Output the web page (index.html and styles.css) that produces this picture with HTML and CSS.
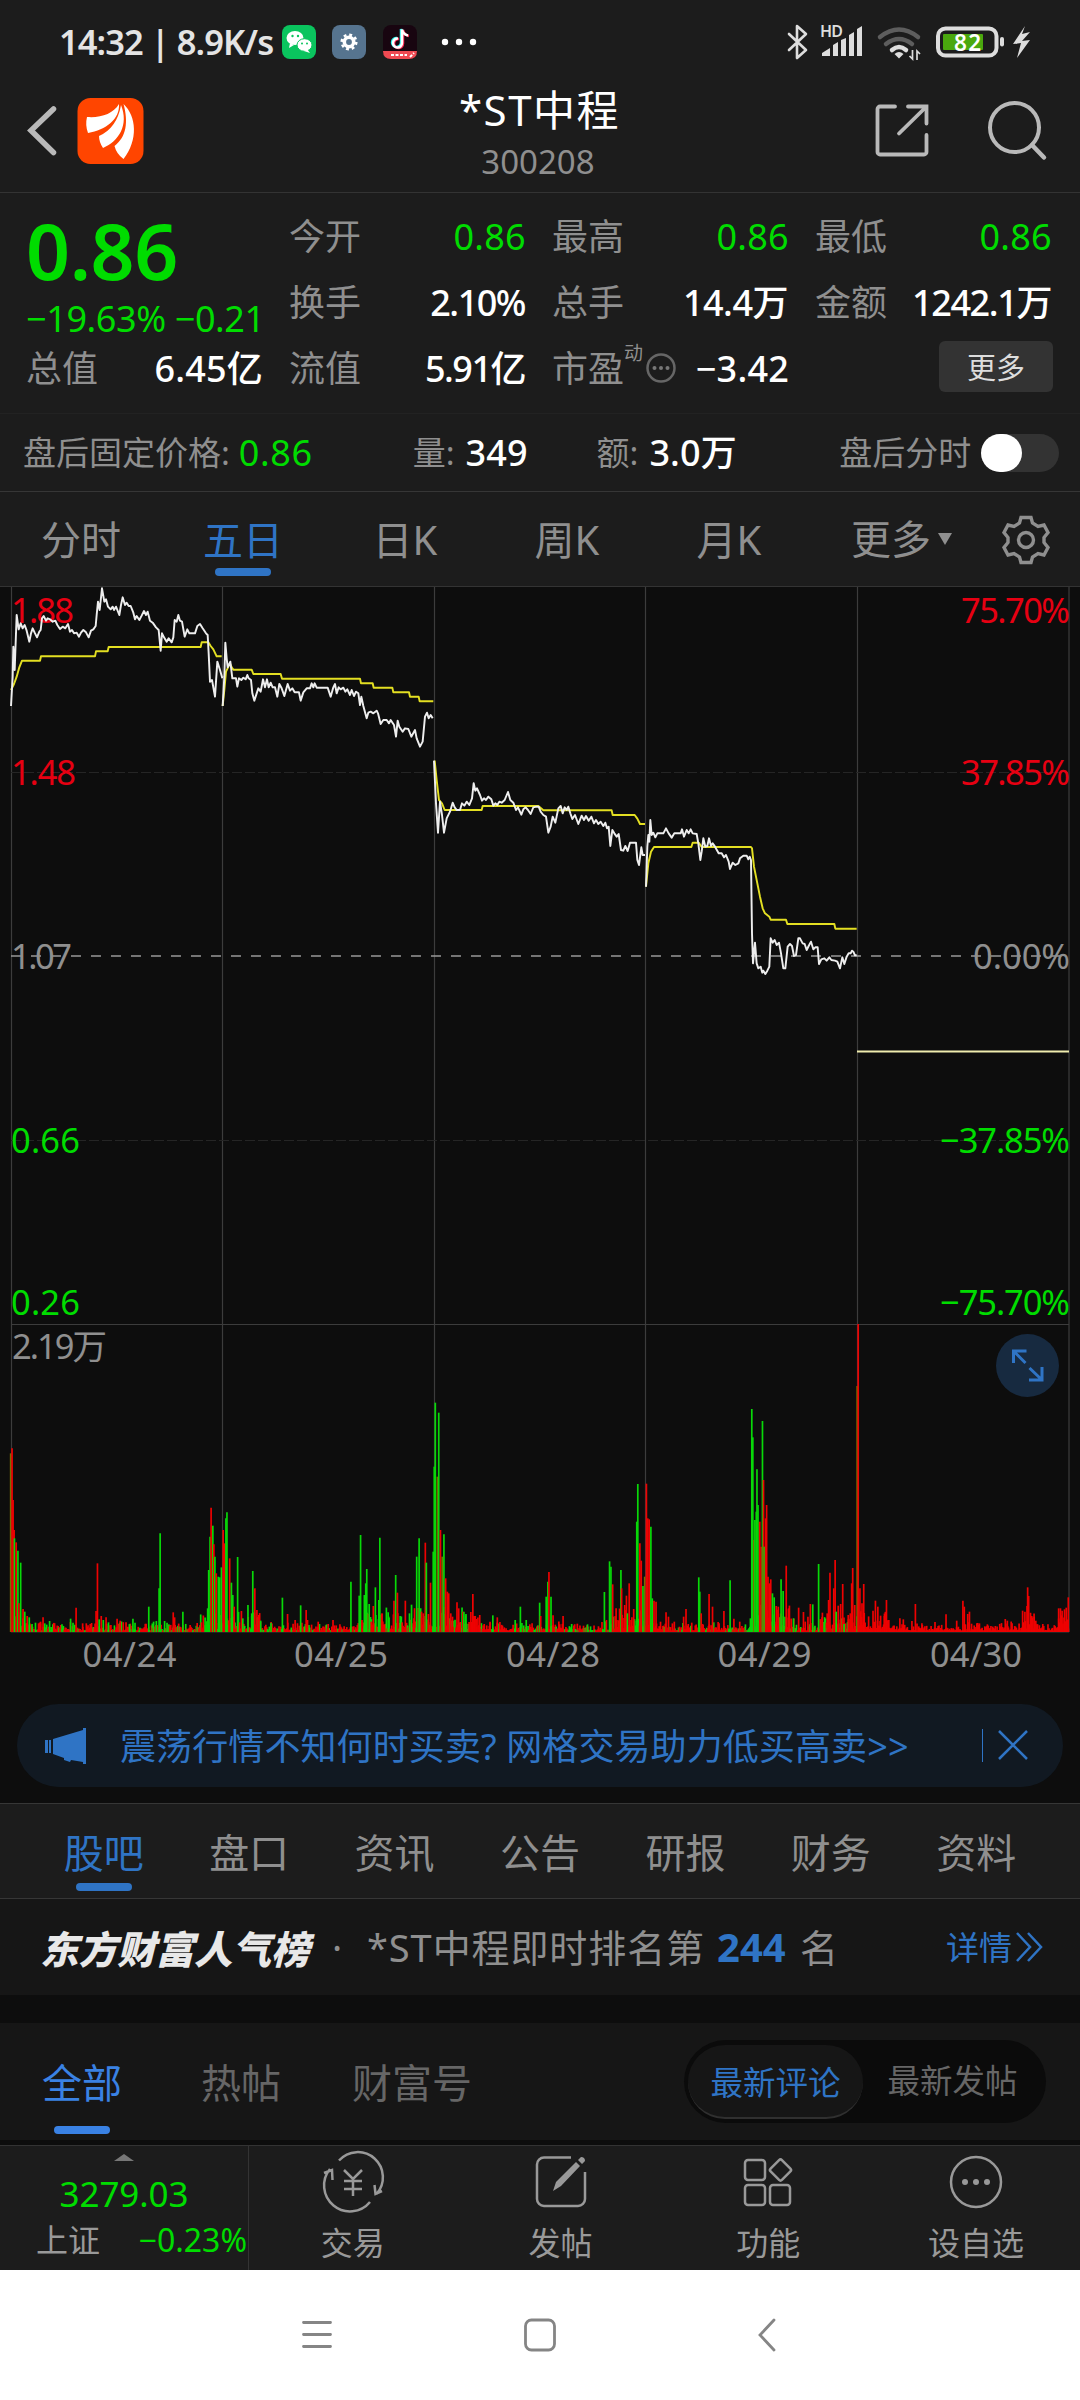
FILE: index.html
```html
<!DOCTYPE html>
<html lang="zh-CN">
<head>
<meta charset="utf-8">
<title>*ST中程 300208</title>
<link rel="stylesheet" href="styles.css">
</head>
<body>
<header class="top">
  <div class="status">
    <span class="clock">14:32 | 8.9K/s</span>
    <svg class="apps" width="200" height="40" viewBox="280 22 200 40">
      <rect x="282" y="25" width="34" height="34" rx="8" fill="#0ac45e"/>
      <ellipse cx="295" cy="38" rx="8.5" ry="7" fill="#fff"/><path d="M290 43l-1 5 5-3z" fill="#fff"/>
      <ellipse cx="304.500" cy="45" rx="7.500" ry="6.300" fill="#fff" stroke="#0ac45e" stroke-width="1"/><path d="M307 49l3 4-6-2z" fill="#fff"/>
      <g fill="#0ac45e"><circle cx="292.500" cy="36" r="1.200"/><circle cx="298" cy="36" r="1.200"/><circle cx="302" cy="43.500" r="1"/><circle cx="307" cy="43.500" r="1"/></g>
      <rect x="332" y="25" width="34" height="34" rx="8" fill="#56748f"/>
      <circle cx="349" cy="42" r="4.700" fill="none" stroke="#fff" stroke-width="3.600"/>
      <circle cx="349" cy="42" r="7.300" fill="none" stroke="#fff" stroke-width="2.500" stroke-dasharray="2.900 2.833"/>
      <rect x="383" y="25" width="34" height="34" rx="8" fill="#180510"/>
      <path d="M383 51h34q0 8-8 8h-18q-8 0-8-8z" fill="#ef4a52"/>
      <path d="M391 55h16M410 57l4-4" stroke="#fff" stroke-width="2" stroke-dasharray="3 1.500"/>
      <g fill="none" stroke-width="2.500"><path d="M397 38a4.500 4.500 0 1 0 4 4.500V29q1 5 6 6" stroke="#25f4ee"/><path d="M399 39a4.500 4.500 0 1 0 4 4.500V30q1 5 6 6" stroke="#fe2c55"/><path d="M398 38.500a4.500 4.500 0 1 0 4 4.500V29.500q1 5 6 6" stroke="#fff"/></g>
      <g fill="#fff"><circle cx="445" cy="42" r="3.200"/><circle cx="459" cy="42" r="3.200"/><circle cx="473" cy="42" r="3.200"/></g>
    </svg>
    <svg class="signals" width="250" height="40" viewBox="784 22 250 40">
      <path d="M789 34l17 16-9 8V26l9 8-17 16" fill="none" stroke="#ddd" stroke-width="2.600" stroke-linejoin="round" stroke-linecap="round"/>
      <text x="820" y="37" class="hd" textLength="23">HD</text>
      <path d="M822 56v-3l8-5v8zM833 56V45l5-3v14zM841 56V40l5-2v18zM849 56V35l5-3v24zM857 56V29l5-3v30z" fill="#ddd"/>
      <g fill="none" stroke-linecap="round" stroke-width="4.500"><path d="M880 37q19-15 38 0" stroke="#5d5d5d"/><path d="M886 44q13-10 26 0" stroke="#5d5d5d"/><path d="M892 50q7-6 14 0" stroke="#ddd"/></g>
      <path d="M894.500 54q4.500-4 9 0l-4.500 4.500z" fill="#ddd"/>
      <path d="M912.500 50v9l-3-3M917 60v-9l3 3" fill="none" stroke="#ddd" stroke-width="1.700"/>
      <rect x="938" y="28.500" width="58.500" height="27" rx="7.500" fill="none" stroke="#ddd" stroke-width="4"/>
      <rect x="943" y="34" width="40" height="16" rx="1" fill="#4aa80e"/>
      <rect x="1000" y="37" width="4" height="9.500" rx="2" fill="#ddd"/>
      <text x="954" y="51" class="battery" textLength="27">82</text>
      <path d="M1025 26l-12 18 8-1-4 15 13-18-8 1 8-9-8 2z" fill="#ddd"/>
    </svg>
  </div>
  <div class="titlebar">
    <svg width="130" height="72" viewBox="20 95 130 72">
      <path d="M53.500 109L31 130.500 53.500 152.500" fill="none" stroke="#b9b9b9" stroke-width="5.500" stroke-linecap="round"/>
      <rect x="77.500" y="98" width="66" height="66" rx="13" fill="#ff4500"/>
      <path d="M87 117C101 118 113 114 119 104c1 15-13 26-31 29q-3-8-1-16z" fill="#fff"/>
      <path d="M99 136q18-8 22-31c8 20-2 36-18 43q-4-6-4-12z" fill="#fff"/>
      <path d="M123.500 104c13 12 15 36 0 55q-7-5-9-13c12-9 14-24 9-42z" fill="#fff"/>
    </svg>
    <div class="name"><h1>*ST中程</h1><p>300208</p></div>
    <svg width="180" height="64" viewBox="872 98 180 64" fill="none" stroke="#b9b9b9">
      <path d="M895 106.500h-15a2.500 2.500 0 0 0-2.500 2.500v43a2.500 2.500 0 0 0 2.500 2.500h44a2.500 2.500 0 0 0 2.500-2.500v-17M908 106.500h18.500v17M926 107L899 133.500" stroke-width="3.800" stroke-linecap="round"/>
      <circle cx="1014.500" cy="127.500" r="24.500" stroke-width="4"/><path d="M1032 145l12 12.500" stroke-width="4.500" stroke-linecap="round"/>
    </svg>
  </div>
</header>

<section class="quote">
  <div class="col">
    <div class="price">0.86</div>
    <div class="change">−19.63% −0.21</div>
    <div class="cell"><span>总值</span><b class="wide">6.45亿</b></div>
  </div>
  <div class="col">
    <div class="cell"><span>今开</span><b class="down">0.86</b></div>
    <div class="cell"><span>换手</span><b class="pct">2.10%</b></div>
    <div class="cell"><span>流值</span><b class="pct">5.91亿</b></div>
  </div>
  <div class="col">
    <div class="cell"><span>最高</span><b class="down">0.86</b></div>
    <div class="cell"><span>总手</span><b>14.4万</b></div>
    <div class="cell"><span>市盈<sup>动</sup></span>
      <svg class="info" width="32" height="32" viewBox="0 0 32 32"><circle cx="16" cy="16" r="13.500" fill="none" stroke="#666" stroke-width="2.500"/><g fill="#777"><circle cx="9.500" cy="16" r="2"/><circle cx="16" cy="16" r="2"/><circle cx="22.500" cy="16" r="2"/></g></svg>
      <b class="wide">−3.42</b></div>
  </div>
  <div class="col">
    <div class="cell"><span>最低</span><b class="down">0.86</b></div>
    <div class="cell"><span>金额</span><b class="amount">1242.1万</b></div>
    <div class="cell end"><button class="more">更多</button></div>
  </div>
</section>
<section class="after">
  <span class="a1">盘后固定价格:</span><b class="down">0.86</b>
  <span class="a2">量:</span><b>349</b>
  <span class="a3">额:</span><b>3.0万</b>
  <span class="a4">盘后分时</span><i class="toggle"></i>
</section>

<nav class="periods">
  <a>分时</a><a class="on">五日</a><a>日K</a><a>周K</a><a>月K</a>
  <a class="drop">更多<svg width="14" height="12" viewBox="0 0 14 12"><path d="M0 0h14L7 12z" fill="#8f8f8f"/></svg></a>
  <svg class="gear" width="50" height="50" viewBox="-25 -25 50 50" fill="none" stroke="#8f8f8f" stroke-width="3.400">
    <path d="M-5-22.500H5L6.500-17 12-13.500 18-15 22-7.500 18-2.500V2.500L22 7.500 18 15 12 13.500 6.500 17 5 22.500H-5L-6.500 17-12 13.500-18 15-22 7.500-18 2.500V-2.500L-22-7.500-18-15-12-13.500-6.500-17z"/><circle r="7.500"/>
  </svg>
</nav>

<section class="chart">
  <svg width="1080" height="1104" viewBox="0 587 1080 1104">
    <g stroke="#3c3c3c" stroke-width="1.200" fill="none">
      <path d="M11.500 587V1632M222.500 587V1632M434.500 587V1632M645.500 587V1632M857.500 587V1632M1069 587V1632M11 1324.500H1069M11 1632H1069"/>
      <path d="M11 772.500H1069M11 1140.500H1069" stroke="#252525" stroke-dasharray="10 3"/>
    </g>
    <path d="M11 956H1069" stroke="#989898" stroke-width="1.500" stroke-dasharray="10 10"/>
    <g class="labels">
      <text class="up" x="11" y="623" textLength="63">1.88</text><text class="up" x="11" y="785" textLength="65">1.48</text>
      <text x="11" y="969" textLength="61">1.07</text>
      <text class="dn" x="11" y="1153" textLength="69">0.66</text><text class="dn" x="11" y="1315" textLength="69">0.26</text>
      <g text-anchor="end"><text class="up" x="1070" y="623" textLength="109">75.70%</text><text class="up" x="1070" y="785" textLength="109">37.85%</text><text x="1070" y="969" textLength="97">0.00%</text><text class="dn" x="1070" y="1153" textLength="130">−37.85%</text><text class="dn" x="1070" y="1315" textLength="130">−75.70%</text></g>
      <text x="12" y="1359" textLength="95">2.19万</text>
      <g text-anchor="middle"><text x="129.500" y="1667" textLength="94">04/24</text><text x="341" y="1667" textLength="94">04/25</text><text x="553" y="1667" textLength="94">04/28</text><text x="764.500" y="1667" textLength="94">04/29</text><text x="976" y="1667" textLength="92">04/30</text></g>
    </g>
    <g class="avg" transform="translate(0 580) scale(.33333)">
      <polyline points="33,330 42,312 50,290 58,262 66,242 120,242 123,229 285,229 288,214 323,214 326,201 602,201 605,187 625,187 632,198 640,208 650,229 665,229"/>
      <polyline points="668,378 673,330 678,275 690,250 695,262 700,269 755,269 760,282 842,282 846,296 1080,296 1083,310 1118,310 1121,323 1177,323 1180,337 1227,337 1230,350 1256,350 1259,364 1300,364"/>
    </g>
    <g class="avg" transform="translate(430 720) scale(.33333)">
      <polyline points="14,122 20,180 27,240 36,250 44,270 155,270 158,258 325,258 340,271 545,271 548,285 614,285 622,296 630,312 645,312"/>
      <polyline points="648,500 655,430 663,395 672,381 784,381 788,368 806,368 815,381 963,381 966,385 972,440 982,490 990,530 998,565 1005,580 1018,590 1022,599 1068,599 1072,612 1213,612 1216,626 1280,626"/>
    </g>
    <g class="line" transform="translate(0 580) scale(.33333)">
      <polyline points="33,378 38,290 40,200 44,270 50,105 56,148 62,130 68,145 74,135 80,152 88,185 93,160 98,145 104,158 111,172 118,155 122,150 126,115 131,108 138,122 143,115 150,118 158,125 166,122 172,135 180,147 188,140 196,145 204,132 210,155 216,150 222,160 230,158 237,170 243,158 250,150 258,157 266,172 273,152 280,148 287,138 290,105 294,65 299,90 306,25 313,65 318,58 324,80 332,88 338,80 342,90 348,80 358,105 363,75 368,52 375,75 380,68 386,78 392,78 400,98 405,118 410,108 418,120 425,107 432,93 438,105 443,95 450,122 458,128 468,142 476,150 482,212 486,160 492,172 500,185 506,175 515,187 520,172 524,120 530,125 535,105 540,122 546,125 554,170 562,148 568,160 585,160 592,138 600,132 608,145 618,160 623,165 626,220 630,305 636,300 645,350 652,245 660,270 667,295"/>
      <polyline points="668,378 673,290 676,188 680,235 683,262 691,245 697,295 708,295 712,320 717,295 724,300 730,293 737,298 742,285 746,295 753,300 757,340 763,362 770,340 775,325 782,335 789,298 795,322 801,298 806,322 812,308 818,322 825,322 832,350 838,312 845,325 853,348 863,312 870,332 877,325 884,337 897,337 902,362 910,337 920,325 930,325 935,310 940,322 944,310 950,323 983,323 992,350 1000,322 1005,312 1010,340 1016,322 1022,328 1030,323 1036,335 1042,328 1050,345 1055,330 1062,348 1068,335 1075,340 1080,375 1084,350 1090,378 1100,415 1105,398 1112,395 1120,400 1130,392 1134,400 1142,432 1150,420 1160,420 1167,430 1172,420 1182,435 1188,470 1193,422 1198,440 1208,455 1215,445 1225,447 1234,470 1245,450 1250,475 1260,500 1268,485 1275,410 1281,398 1286,415 1292,405 1298,415"/>
    </g>
    <g class="line" transform="translate(430 720) scale(.33333)">
      <polyline points="12,122 18,250 24,338 30,245 36,285 42,338 50,295 60,275 68,248 74,262 80,270 90,270 96,250 103,257 110,245 118,255 126,235 131,190 136,212 141,205 150,225 156,242 162,235 168,240 175,230 184,238 190,257 196,250 202,255 208,245 215,248 224,240 234,216 241,240 250,248 258,270 264,262 274,284 280,268 287,262 294,270 302,282 310,262 320,260 326,260 332,275 340,285 348,290 355,338 362,320 368,290 376,308 385,265 392,258 398,280 404,262 410,270 415,260 421,280 427,297 435,285 445,312 455,287 462,300 468,288 476,302 484,290 492,310 498,300 505,312 512,305 520,318 526,308 531,325 536,320 541,378 547,330 553,340 560,350 566,342 573,390 580,392 586,378 593,393 600,368 618,368 622,420 627,435 634,382 638,405 645,405"/>
      <polyline points="648,500 652,380 655,345 658,365 661,300 665,345 670,338 676,352 682,340 700,340 708,325 716,340 725,353 733,340 752,340 756,328 762,350 770,330 776,340 782,328 788,340 800,342 805,370 811,420 815,395 820,355 826,380 832,378 837,355 843,378 848,370 855,380 866,400 875,400 882,412 888,405 896,425 900,447 908,428 916,435 925,430 930,415 940,407 950,407 955,418 959,410 963,420 966,640 969,730 975,668 980,730 985,745 992,740 997,758 1000,752 1006,762 1012,752 1018,740 1022,655 1028,668 1034,660 1040,675 1047,668 1053,700 1060,745 1066,745 1073,680 1080,672 1086,678 1092,708 1098,705 1105,655 1110,655 1118,670 1124,672 1130,690 1136,678 1143,665 1150,688 1156,682 1163,682 1167,732 1174,718 1183,715 1190,722 1198,712 1204,720 1215,722 1222,725 1230,745 1237,712 1243,732 1250,710 1256,700 1262,700 1266,692 1270,695 1275,706 1280,706"/>
    </g>
    <path d="M857 1051.500H1069" stroke="#efecae" stroke-width="2"/>
    <g id="volume" stroke-width="1.700"></g>
    <circle cx="1027.500" cy="1365.500" r="31.500" fill="#172a40"/>
    <path d="M1013.500 1363v-12h13M1014 1351.500l11.500 11.500M1042 1367v13h-13M1041.500 1379.500l-12-11.500" fill="none" stroke="#2f74c5" stroke-width="3"/>
  </svg>
</section>

<div class="promo-wrap"><div class="promo">
  <svg width="44" height="40" viewBox="43 1725 44 40" fill="#2f74c5"><path d="M45 1739h3v13h-3zM49 1739h2v13h-2zM53 1738l30-9v-2h3v36h-3v-2l-12-2-1 2-6-2v-2l-11-4z"/></svg>
  <span>震荡行情不知何时买卖? 网格交易助力低买高卖&gt;&gt;</span>
  <svg width="50" height="38" viewBox="980 1727 50 38" fill="none" stroke="#2f74c5"><path d="M982.500 1729v33" stroke-width="1"/><path d="M999 1731l28 28M1027 1731l-28 28" stroke-width="2.500"/></svg>
</div></div>

<nav class="sections"><a class="on">股吧</a><a>盘口</a><a>资讯</a><a>公告</a><a>研报</a><a>财务</a><a>资料</a></nav>

<section class="rank">
  <strong>东方财富人气榜</strong><span class="dot">·</span><span class="txt">*ST中程即时排名第</span><em>244</em><span class="ming">名</span>
  <a>详情</a>
  <svg width="28" height="30" viewBox="0 0 28 30" fill="none" stroke="#2f74c5" stroke-width="2.500"><path d="M1 1l13 14L1 29M12 1l13 14-13 14"/></svg>
</section>

<section class="feed">
  <a class="on">全部</a><a>热帖</a><a>财富号</a>
  <div class="seg"><span class="sel">最新评论</span><span>最新发帖</span></div>
</section>

<footer class="bottom">
  <div class="index">
    <svg width="20" height="7" viewBox="0 0 20 7"><path d="M0 7L10 0l10 7z" fill="#777"/></svg>
    <div class="val">3279.03</div>
    <div class="sub"><span>上证</span><b>−0.23%</b></div>
  </div>
  <a><svg width="62" height="56" viewBox="-31 -28 62 56" fill="none" stroke="#999" stroke-width="2.500"><path d="M-14-21.500A25 25 0 0 1 23.500 12M17 20A25 25 0 0 1-23-13M-29-9l8-3 .5 10M29 9l-6.500 3-1-9M-9-12L0-3 9-12M0-3V14M-9-1H9M-9 7H9"/></svg>交易</a>
  <a><svg width="62" height="56" viewBox="-31 -28 62 56" fill="none" stroke="#999" stroke-width="2.500"><path d="M10-24.500H-17a7 7 0 0 0-7 7V17a7 7 0 0 0 7 7H17a7 7 0 0 0 7-7V-10"/><path d="M-8 9l3-9L15-20l4 4L0 4zM17-22l3-3q4 0 4 4l-3 3z" fill="#999" stroke="none"/></svg>发帖</a>
  <a><svg width="62" height="56" viewBox="-31 -28 62 56" fill="none" stroke="#999" stroke-width="2.500"><rect x="-23" y="-22" width="20" height="20" rx="3"/><rect x="-23" y="3" width="20" height="20" rx="3"/><rect x="2" y="3" width="20" height="20" rx="3"/><rect x="-8" y="-8" width="16" height="16" rx="2" transform="translate(12.500 -12) rotate(45)"/></svg>功能</a>
  <a><svg width="62" height="56" viewBox="-31 -28 62 56" fill="none" stroke="#999" stroke-width="2.500"><circle r="25"/><g fill="#999" stroke="none"><circle cx="-11" r="3"/><circle r="3"/><circle cx="11" r="3"/></g></svg>设自选</a>
</footer>
<div class="sysnav">
  <svg width="1080" height="50" viewBox="0 2310 1080 50" fill="none" stroke="#858585" stroke-width="2.800" stroke-linecap="round"><path d="M303.500 2322.500h27M303.500 2334.500h27M303.500 2346.500h27M774 2320l-14 15 14 15"/><rect x="525.500" y="2320" width="29" height="30" rx="6"/></svg>
</div>
<script src="volume.js"></script>
</body>
</html>
```
FILE: styles.css
```css
* { box-sizing: border-box; }
body { margin: 0; width: 1080px; background: #0d0d0d; color: #8f8f8f; font-family: "Noto Sans", "Noto Sans CJK SC", sans-serif; font-size: 36px; line-height: 1; }
svg { display: block; flex: none; overflow: visible; }
b { font-weight: 500; color: #fff; }
b.down { color: #00dc00; font-weight: 400; letter-spacing: .4px; }

.top { height: 193px; background: #1c1c1c; border-bottom: 1px solid #333; }
.status { height: 84px; display: flex; align-items: center; padding: 0 46px 0 59px; }
.clock { width: 221px; font-size: 34.5px; font-weight: 600; color: #e4e4e4; letter-spacing: -.95px; white-space: nowrap; }
.signals { margin-left: auto; }
.hd { font-size: 16px; font-weight: 600; fill: #ddd; }
.battery { font-size: 22.500px; font-weight: 600; fill: #fff; }
.titlebar { height: 108px; padding: 0 28px 0 20px; display: flex; justify-content: space-between; align-items: flex-start; }
.titlebar > svg:first-child { margin-top: 11px; }
.titlebar > svg:last-child { margin-top: 14px; }
.name { text-align: center; margin-left: 54px; }
.name h1 { margin: 0; font-size: 42px; font-weight: 400; line-height: 52px; color: #fff; letter-spacing: 1.5px; margin-right: -3px; white-space: nowrap; }
.name p { margin: 0; font-size: 33px; line-height: 52px; }

.quote { height: 221px; background: #1c1c1c; padding: 11px 26px 0; display: grid; grid-template-columns: repeat(4, 236px); column-gap: 27px; border-bottom: 1px solid #222; }
.cell { height: 66px; display: flex; align-items: center; justify-content: space-between; position: relative; white-space: nowrap; }
.cell b { letter-spacing: -.5px; }
.cell b.down { letter-spacing: .3px; margin-right: -1px; }
.cell b.wide { letter-spacing: .2px; margin-right: -1px; }
.cell b.pct { letter-spacing: -1.500px; }
.cell b.amount { letter-spacing: -1.400px; }
.cell.end { justify-content: flex-end; margin-right: -2px; }
.price { margin-top: 10px; height: 74px; font-size: 77px; line-height: 74px; font-weight: 600; color: #00dc00; letter-spacing: -.4px; }
.change { height: 48px; line-height: 62px; color: #00dc00; white-space: nowrap; letter-spacing: -.4px; }
.cell sup { font-size: 19px; vertical-align: 22px; line-height: 0; margin-left: 0; }
.info { position: absolute; left: 93px; top: 16px; }
.more { width: 114px; height: 51px; margin-bottom: 6px; border: 0; border-radius: 6px; background: #333; color: #ddd; font: 29px/48px "Noto Sans CJK SC", sans-serif; padding: 0; }
.after { height: 78px; background: #1c1c1c; border-bottom: 1px solid #363636; display: flex; align-items: center; padding: 0 21px 0 23px; white-space: nowrap; }
.after span { font-size: 33px; }
.after b { letter-spacing: .1px; }
.a1 { width: 216px; } .a1 + b.down { width: 174px; letter-spacing: .6px; }
.a2 { width: 53px; } .a2 + b { width: 131px; }
.a3 { width: 53px; } .a3 + b { width: 190px; }
.a4 { width: 142px; }
.toggle { width: 78px; height: 38px; border-radius: 19px; background: #333; }
.toggle::before { content: ""; display: block; width: 41px; height: 38px; border-radius: 20px; background: #fff; }

.periods, .sections { display: flex; background: #1c1c1c; font-size: 40px; }
.periods { height: 95px; border-bottom: 1px solid #333; }
.periods a { width: 162px; height: 94px; line-height: 96px; text-align: center; position: relative; white-space: nowrap; }
.on { color: #2f74c5; position: relative; }
.on::after { content: ""; position: absolute; left: 50%; margin-left: -28px; bottom: 10px; width: 56px; height: 8px; border-radius: 4px; background: currentColor; }
.periods a.drop { width: 191px; display: flex; align-items: center; gap: 7px; padding-left: 41px; }
.gear { margin-top: 23px; }

.chart { height: 1104px; }
.labels { font-size: 34.5px; fill: #8f8f8f; }
.labels .up { fill: #e60012; }
.labels .dn { fill: #00dc00; }
.avg, .line { fill: none; stroke-linejoin: round; stroke-width: 5.800px; }
.avg { stroke: #e3df22; }
.line { stroke: #eee; }

.promo-wrap { height: 112px; padding: 13px 17px 0; }
.promo { height: 83px; border-radius: 42px; background: #111922; color: #2f74c5; display: flex; align-items: center; padding: 0 33px 0 26px; }
.promo span { margin: 2px auto 0 33px; font-size: 36px; white-space: nowrap; letter-spacing: .1px; }

.sections { height: 96px; border: solid #363636; border-width: 1px 0; padding: 0 31px; }
.sections a { flex: 1; text-align: center; line-height: 97px; }
.sections .on::after { bottom: 7px; }

.rank { height: 96px; background: #161616; display: flex; align-items: center; padding: 0 36px 0 40px; white-space: nowrap; font-size: 38px; }
.rank strong { width: 292px; font: italic 900 38.5px/1 "Noto Sans CJK SC", sans-serif; color: #e8e8e8; }
.dot { width: 35px; }
.txt { width: 350px; letter-spacing: .9px; }
.rank em { width: 83px; font-style: normal; font-weight: 700; font-size: 40px; color: #2f74c5; }
.rank a { margin-left: auto; margin-right: 4px; font-size: 33px; color: #2f74c5; }

.feed { height: 117px; margin-top: 28px; background: #161616; display: flex; align-items: flex-start; font-size: 40px; color: #666; padding: 0 34px 0 42px; white-space: nowrap; }
.feed > a { height: 117px; line-height: 119px; margin-right: 79px; }
.feed > a + a { margin-right: 71px; }
.feed .on { color: #3a82e4; }
.feed .on::after { bottom: 6px; }
.seg { margin: 17px 0 0 auto; width: 362px; height: 83px; border-radius: 42px; background: #0b0b0b; padding: 4px; display: flex; align-items: center; font-size: 32.5px; }
.seg span { flex: 1; text-align: center; }
.seg .sel { flex: 0 0 175px; height: 74px; line-height: 76px; border-radius: 37px; background: #161616; border-bottom: 2px solid #303030; color: #2f74c5; }

.bottom { margin-top: 5px; height: 125px; background: #1c1c1c; border-top: 1px solid #333; display: flex; font-size: 32px; color: #999; }
.bottom > a { flex: 1; display: flex; flex-direction: column; align-items: center; padding-top: 8px; line-height: 66px; }
.index { width: 249px; border-right: 1px solid #333; padding-top: 8px; }
.index svg { margin: 0 auto; }
.val { height: 46px; line-height: 65px; text-align: center; font-size: 35px; color: #00dc00; letter-spacing: -.1px; }
.sub { display: flex; justify-content: space-between; padding: 0 1px 0 36px; line-height: 66px; }
.sub b { color: #00dc00; font-weight: 400; letter-spacing: 0; }
.sysnav { height: 130px; background: #fff; padding-top: 40px; }
```
FILE: volume.js
```js
// Per-minute volume bars: [x, bar top, colour], in chart units below the price pane.
const left = [
[31,430,'m'],[35,415,'r'],[38,570,'r'],[41,660,'r'],[42,685,'g'],[47,697,'r'],[52,722,'g'],[55,880,'r'],[60,758,'g'],[67,897,'r'],[72,905,'g'],[79,918,'r'],[85,922,'g'],[93,942,'g'],[103,938,'g'],[112,940,'r'],[118,935,'r'],[125,922,'r'],[130,940,'g'],[144,933,'g'],[180,943,'g'],[205,926,'g'],[212,938,'g'],[221,893,'r'],[240,940,'r'],[262,942,'r'],[279,903,'r'],[283,760,'r'],[288,928,'g'],[294,918,'r'],[300,930,'g'],[308,922,'r'],[315,937,'g'],[340,926,'r'],[349,932,'r'],[366,937,'r'],[376,942,'g'],[386,926,'g'],[392,938,'g'],[432,890,'g'],[446,935,'g'],[454,933,'g'],[462,835,'g'],[465,670,'g'],[478,933,'g'],[485,938,'g'],[503,907,'r'],[507,922,'r'],[531,905,'g'],[585,937,'r'],
[603,895,'g'],[606,780,'g'],[610,680,'g'],[613,593,'r'],[618,647,'g'],[621,703,'r'],[624,740,'g'],[628,790,'r'],[634,800,'g'],[638,802,'g'],[643,772,'g'],[648,660,'r'],[652,700,'r'],[656,625,'g'],[659,607,'g'],[667,745,'r'],[672,818,'g'],[676,855,'g'],[680,890,'r'],[690,741,'g'],[701,903,'r'],[705,925,'g'],[720,885,'g'],[731,910,'g'],[734,783,'g'],[740,835,'r'],[746,900,'r'],[751,915,'r'],[757,932,'g'],[787,938,'g'],[820,863,'g'],[835,912,'r'],[857,930,'r'],[873,886,'g'],[889,900,'r'],[893,930,'r'],[924,935,'r'],[953,942,'r'],[967,930,'r'],[987,943,'r'],
[1019,815,'g'],[1043,857,'g'],[1047,675,'g'],[1051,930,'r'],[1058,855,'g'],[1062,820,'g'],[1065,777,'g'],[1072,882,'g'],[1078,935,'r'],[1084,888,'r'],[1090,832,'g'],[1100,870,'g'],[1103,683,'g'],[1109,912,'r'],[1129,920,'g'],[1144,872,'r'],[1149,795,'g'],[1154,848,'r'],[1162,918,'g'],[1177,872,'r'],[1189,910,'g'],[1195,884,'g'],[1202,925,'r'],[1210,740,'g'],[1217,685,'g'],[1224,905,'r'],[1229,910,'r'],[1235,698,'r'],[1238,758,'g'],[1244,912,'r'],[1250,818,'r'],[1258,725,'g'],[1261,470,'g'],[1264,278,'g'],[1270,500,'m'],[1274,308,'g'],[1279,660,'r'],[1284,740,'m'],[1289,673,'g'],[1294,805,'r'],[1299,845,'r'],[1303,850,'r'],[1309,910,'r'],[1314,920,'r'],[1327,877,'r'],[1332,895,'r'],[1347,905,'g'],[1353,912,'g'],[1373,852,'r'],[1377,918,'r'],[1393,915,'r'],[1406,942,'r'],[1423,935,'r'],[1431,916,'g'],[1444,922,'r'],[1496,930,'g'],[1511,890,'g'],[1528,930,'g'],[1545,940,'r'],[1567,878,'g']];
const right = [
[2,918,'r'],[18,860,'g'],[23,815,'g'],[26,786,'r'],[32,860,'g'],[38,916,'r'],[67,918,'r'],[92,942,'g'],[138,943,'g'],[187,846,'g'],[193,930,'r'],[202,754,'g'],[206,770,'g'],[211,823,'r'],[221,895,'r'],[235,780,'g'],[237,835,'r'],[246,885,'r'],[251,857,'r'],[254,910,'g'],[259,820,'r'],[272,897,'r'],[281,635,'g'],[284,522,'g'],[290,700,'r'],[294,752,'r'],[299,828,'g'],[304,800,'m'],[309,521,'r'],[313,625,'r'],[317,628,'r'],[322,650,'g'],[326,865,'g'],[331,872,'r'],[337,875,'r'],[350,935,'r'],[366,907,'r'],[373,920,'r'],[390,935,'r'],[417,920,'r'],[424,897,'r'],[461,802,'g'],[464,845,'g'],[468,910,'r'],[491,852,'r'],[501,890,'r'],[520,940,'r'],[534,903,'r'],[552,811,'g'],[563,926,'r'],[580,935,'r'],[611,925,'g'],
[615,297,'g'],[618,382,'g'],[621,690,'m'],[624,630,'g'],[628,605,'g'],[630,478,'g'],[633,585,'g'],[638,635,'r'],[642,710,'r'],[646,333,'g'],[649,510,'r'],[651,710,'g'],[655,625,'r'],[658,585,'r'],[662,800,'r'],[666,820,'r'],[670,808,'r'],[675,850,'g'],[680,862,'g'],[686,888,'r'],[692,890,'r'],[700,808,'g'],[706,843,'g'],[715,767,'r'],[722,895,'r'],[736,925,'g'],[751,893,'r'],[765,906,'r'],[778,920,'r'],[785,882,'r'],[792,883,'g'],[809,762,'g'],[820,908,'r'],[834,910,'r'],[838,870,'r'],[842,788,'r'],[853,835,'r'],[857,750,'r'],[860,905,'g'],[866,887,'r'],[873,882,'r'],[879,822,'r'],[883,942,'g'],[895,915,'r'],[901,910,'r'],[905,820,'r'],[908,774,'r'],[914,885,'r'],[921,228,'m'],[924,42,'r'],[929,835,'r'],[935,880,'r'],[940,822,'r'],[974,872,'r'],[981,890,'r'],[989,917,'r'],[1000,918,'r'],[1006,870,'r'],[1045,925,'r'],[1055,928,'r'],[1080,933,'r'],[1090,882,'r'],[1109,940,'r'],[1147,936,'r'],[1179,913,'r'],[1210,932,'r'],[1228,872,'r'],[1232,890,'r'],[1242,912,'r'],[1247,905,'r'],[1276,940,'r'],[1299,943,'r'],[1351,927,'r'],[1357,932,'r'],[1408,905,'r'],[1416,832,'r'],[1419,858,'r'],[1428,918,'r'],[1435,920,'r'],[1460,942,'r'],[1475,943,'r'],[1506,895,'r'],[1516,902,'r'],[1523,898,'r'],[1528,893,'r'],[1534,862,'r']];
const colours = { r: '#ee0202', g: '#08d808', m: '#787000' };
const layer = document.getElementById('volume');
function bar(x, top, c) {
  const l = document.createElementNS('http://www.w3.org/2000/svg', 'line');
  l.setAttribute('x1', x); l.setAttribute('x2', x);
  l.setAttribute('y1', 1632); l.setAttribute('y2', top);
  l.setAttribute('stroke', colours[c]);
  layer.appendChild(l);
}
const pxPerUnit = 1 / 2.9037;
const all = left.map(d => [d[0] * pxPerUnit, 1310 + d[1] / 3, d[2]])
  .concat(right.map(d => [540 + d[0] * pxPerUnit, 1310 + d[1] / 3, d[2]]));
// Quiet minutes between the peaks carry only a few lots each.
let s = 7;
const rnd = () => (s = (s * 16807) % 2147483647) / 2147483647;
const busy = x => (x < 30 || (x > 198 && x < 262) || (x > 365 && x < 480) || (x > 610 && x < 660) || (x > 750 && x < 795) || (x > 820 && x < 892) || (x > 1022 && x < 1037) || x > 1056);
for (let x = 11.5; x < 1069; x += 0.88) {
  const top = busy(x) ? 3 + rnd() * rnd() * 26 : 1.5 + rnd() * rnd() * 10;
  const pGreen = x > 858 ? 0 : (x > 205 && x < 228) || (x > 745 && x < 765) ? .6 : .24;
  bar(x, 1632 - top, rnd() < pGreen ? 'g' : 'r');
}
all.forEach(d => bar(d[0], d[1], d[2]));
```
